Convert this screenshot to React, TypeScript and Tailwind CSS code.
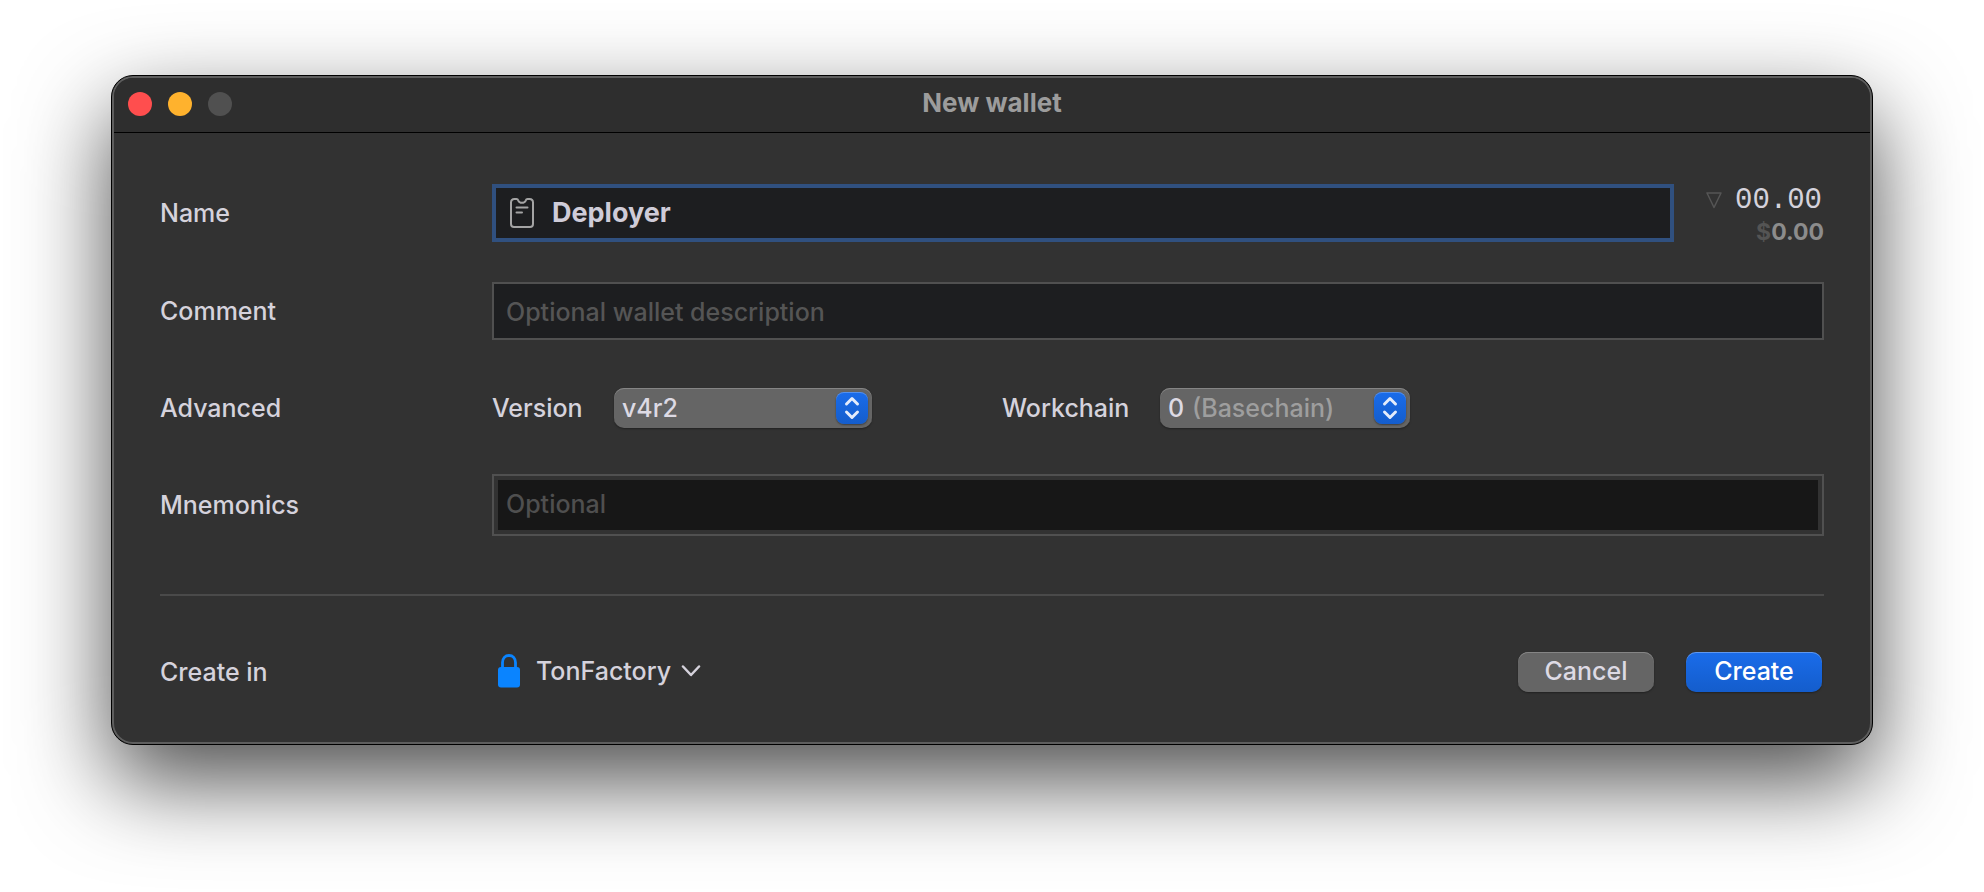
import React from "react";

function Label({ htmlFor, children }: { htmlFor: string; children: React.ReactNode }) {
  return (
    <label htmlFor={htmlFor} className="w-[332px] shrink-0 text-[#d5d2dc]">
      {children}
    </label>
  );
}

function Stepper() {
  return (
    <span
      aria-hidden="true"
      className="pointer-events-none absolute top-1 right-1 flex size-8 items-center justify-center rounded-lg bg-linear-to-b from-[#1a6cea] to-[#145dcc] shadow-[inset_0_1px_0_rgba(255,255,255,0.25),0_1px_2px_rgba(0,0,0,0.4)]"
    >
      <svg width="16" height="24" viewBox="0 0 16 24" fill="none" stroke="#e4ecfb" strokeWidth="3" strokeLinecap="round" strokeLinejoin="round">
        <path d="M2.5 8 8 2.5 13.5 8" />
        <path d="M2.5 16 8 21.5 13.5 16" />
      </svg>
    </span>
  );
}

function PopUp({ id, width, options, caption }: { id: string; width: string; options: string[]; caption?: string }) {
  return (
    <div className={`relative h-10 ${width}`}>
      <select
        id={id}
        defaultValue={options[0]}
        className="h-10 w-full appearance-none rounded-[10px] bg-[#656565] pr-10 pb-[1px] pl-2 text-[#dddae4] shadow-[inset_0_1px_0_#858585,0_1px_2px_rgba(0,0,0,0.35)] outline-none"
      >
        {options.map((o) => (
          <option key={o}>{o}</option>
        ))}
      </select>
      {caption && (
        <span className="pointer-events-none absolute top-0 left-8 leading-10 text-[#9e9e9e]">{caption}</span>
      )}
      <Stepper />
    </div>
  );
}

export default function App() {
  return (
    <main className="min-h-screen bg-white px-[111px] pt-[75px] pb-[147px] font-['Inter',sans-serif] text-[25px] leading-8 font-medium">
      <section className="overflow-hidden rounded-[22px] border border-black bg-[#323232] shadow-[0_36px_90px_rgba(0,0,0,0.7)]">
        <div className="rounded-[21px] border-2 border-[#5e5e5e]">
          <header className="grid h-[55px] grid-cols-[1fr_auto_1fr] items-center rounded-t-[19px] border-b border-black bg-[#2e2e2e] px-[14px] pb-[2px]">
            <div className="flex gap-4">
              <button type="button" aria-label="Close" className="size-6 rounded-full bg-[#ff4e4e]" />
              <button type="button" aria-label="Minimize" className="size-6 rounded-full bg-[#ffb22d]" />
              <button type="button" aria-label="Zoom" disabled className="size-6 rounded-full bg-[#505050]" />
            </div>
            <h1 className="pb-[2px] text-[26px] font-bold text-[#9c9c9c]">New wallet</h1>
          </header>

          <form className="px-[46px] pt-[51px] pb-[50px]" onSubmit={(e) => e.preventDefault()}>
            <div className="flex items-center">
              <Label htmlFor="name">Name</Label>
              <div className="flex h-[58px] min-w-0 flex-1 items-center gap-[18px] border-4 border-[#30507f] bg-[#1d1e20] px-[14px]">
                <svg width="24" height="30" viewBox="0 0 24 30" fill="none" stroke="#a4a4a4" strokeWidth="2" strokeLinecap="round" strokeLinejoin="round" className="shrink-0">
                  <path d="M4.500 1H6.500C8 1 8 1.800 8.300 2.600 8.900 4 10.300 4.800 12 4.800S15.100 4 15.700 2.600C16 1.800 16 1 17.500 1H19.500Q23 1 23 4.500V26Q23 29 20 29H4Q1 29 1 26V4.500Q1 1 4.500 1Z" />
                  <path d="M6.500 9.500H17.500M6.500 14.500H12" />
                </svg>
                <input id="name" defaultValue="Deployer" className="w-full min-w-0 bg-transparent text-[27px] font-bold text-[#cfccd8] outline-none" />
              </div>
              <div className="ml-8 flex h-[58px] w-[118px] shrink-0 flex-col items-end">
                <div className="flex w-full items-center justify-between pr-[2px]">
                  <svg width="16" height="17" viewBox="0 0 16 17" fill="none" stroke="#555" strokeWidth="1.500" strokeLinejoin="round">
                    <path d="M1 1H15L8 15.500Z" />
                  </svg>
                  <span className="font-['Liberation_Mono',monospace] text-[29px] leading-[33px] text-[#d5d2dc]">00.00</span>
                </div>
                <span className="text-[23px] leading-[30px] font-bold text-[#8c8c8c]">
                  <span className="text-[#545454]">$</span>0.00
                </span>
              </div>
            </div>

            <div className="mt-10 flex items-center">
              <Label htmlFor="comment">Comment</Label>
              <input
                id="comment"
                placeholder="Optional wallet description"
                className="h-[58px] min-w-0 flex-1 border-2 border-[#505050] bg-[#1d1e20] px-3 pt-[2px] text-[#d5d2dc] outline-none placeholder:text-[#555555]"
              />
            </div>

            <div className="mt-12 flex items-center">
              <Label htmlFor="version">Advanced</Label>
              <div className="flex items-center text-[#d5d2dc]">
                <label htmlFor="version" className="w-[122px]">Version</label>
                <PopUp id="version" width="w-[258px]" options={["v4r2", "v3r2", "v3r1"]} />
                <label htmlFor="workchain" className="ml-[130px] w-[158px]">Workchain</label>
                <PopUp id="workchain" width="w-[250px]" options={["0", "-1"]} caption="(Basechain)" />
              </div>
            </div>

            <div className="mt-[46px] flex items-center">
              <Label htmlFor="mnemonics">Mnemonics</Label>
              <div className="min-w-0 flex-1 border-2 border-[#505050] p-1">
                <input
                  id="mnemonics"
                  placeholder="Optional"
                  className="block h-[50px] w-full bg-[#171717] px-2 pb-[2px] text-[#d5d2dc] outline-none placeholder:text-[#4f4f4f]"
                />
              </div>
            </div>

            <hr className="mt-[58px] border-t-2 border-[#4a4a4a]" />

            <div className="mt-14 flex items-center">
              <Label htmlFor="keychain">Create in</Label>
              <button id="keychain" type="button" className="flex items-center pb-[2px] text-[#d5d2dc]">
                <svg width="22" height="34" viewBox="0 0 22 34" className="ml-[6px]">
                  <path d="M4.500 15V8.500C4.500 4.300 7.200 1.500 11 1.500S17.500 4.300 17.500 8.500V15" fill="none" stroke="#0a84ff" strokeWidth="2.800" />
                  <rect y="13" width="22" height="20.500" rx="3" fill="#0a84ff" />
                </svg>
                <span className="ml-4">TonFactory</span>
                <svg width="20" height="12" viewBox="0 0 20 12" fill="none" stroke="#d5d2dc" strokeWidth="2.500" strokeLinecap="round" strokeLinejoin="round" className="ml-[10px]">
                  <path d="M2 1.500 10 10 18 1.500" />
                </svg>
              </button>
              <div className="ml-auto flex gap-8 pr-[2px]">
                <button type="button" className="h-10 w-[136px] rounded-[10px] bg-[#656565] pb-[2px] text-[#dddae4] shadow-[inset_0_1px_0_#858585,0_1px_2px_rgba(0,0,0,0.35)]">
                  Cancel
                </button>
                <button type="submit" className="h-10 w-[136px] rounded-[10px] bg-linear-to-b from-[#1a6cea] to-[#145dcc] pb-[2px] text-white shadow-[inset_0_1px_0_rgba(255,255,255,0.3),0_1px_2px_rgba(0,0,0,0.35)]">
                  Create
                </button>
              </div>
            </div>
          </form>
        </div>
      </section>
    </main>
  );
}
